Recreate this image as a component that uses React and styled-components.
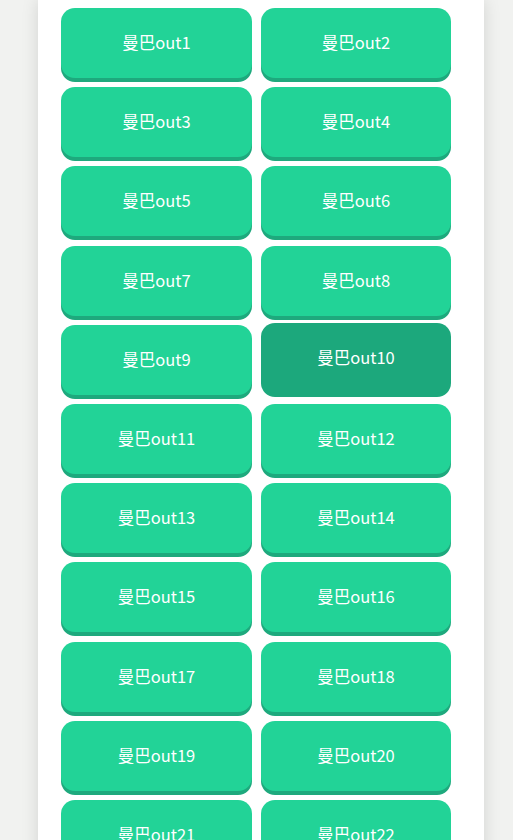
import React from "react";
import styled, { createGlobalStyle } from "styled-components";

const GlobalStyle = createGlobalStyle`
  html, body {
    margin: 0;
    padding: 0;
    background: #f1f2f0;
    overflow: hidden;
  }
`;

const Page = styled.div`
  width: 100%;
  height: 840px;
  overflow: hidden;
`;

const Panel = styled.div`
  width: 446px;
  min-height: 840px;
  margin-left: 38px;
  box-sizing: border-box;
  padding: 8px 0 0 23px;
  background: #fff;
  box-shadow: 0 0 16px rgba(0, 0, 0, 0.13);
`;

const Grid = styled.div`
  display: grid;
  grid-template-columns: 191px 190px;
  column-gap: 9px;
  row-gap: 9.2px;
`;

const MambaButton = styled.button`
  height: 70px;
  border: none;
  border-radius: 14px;
  background: ${(p) => (p.$hover ? "#1ca87c" : "#22d397")};
  box-shadow: 0 4px 0 ${(p) => (p.$hover ? "#1ca87c" : "#1ea97d")};
  transform: ${(p) => (p.$hover ? "translateY(-2px)" : "none")};
  color: #fff;
  font-family: "Noto Sans CJK SC", "Noto Sans", sans-serif;
  font-size: 16.5px;
  font-weight: 400;
  cursor: pointer;
  padding: 0 0 2px;
`;

const items = Array.from({ length: 22 }, (_, i) => i + 1);

const App = () => {
  return (
    <Page>
      <GlobalStyle />
      <Panel>
        <Grid>
          {items.map((n) => (
            <MambaButton key={n} $hover={n === 10}>
              曼巴out{n}
            </MambaButton>
          ))}
        </Grid>
      </Panel>
    </Page>
  );
};

export default App;
